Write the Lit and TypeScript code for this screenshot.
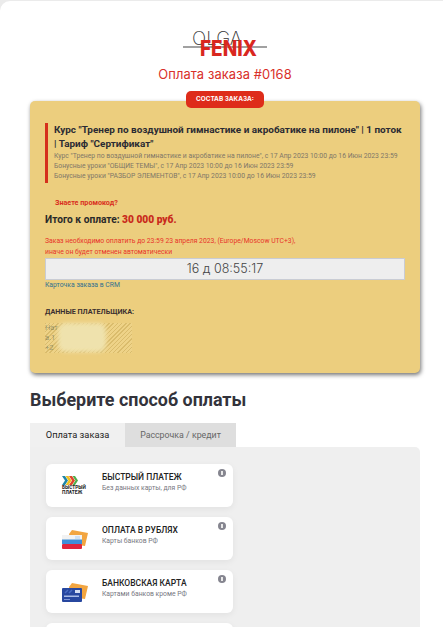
import { LitElement, html, css, svg } from "lit";
import { customElement } from "lit/decorators.js";

const cards = [
  { t: "БЫСТРЫЙ ПЛАТЕЖ", s: "Без данных карты, для РФ", i: "sbp" },
  { t: "ОПЛАТА В РУБЛЯХ", s: "Карты банков РФ", i: "rub" },
  { t: "БАНКОВСКАЯ КАРТА", s: "Картами банков кроме РФ", i: "bank" },
  { t: "", s: "", i: "" },
];

const backCard = svg`<path d="M7 5 L10 1 L26 4 L23 17 L9 15z" fill="#f2a540"/>`;

const icons: Record<string, unknown> = {
  sbp: html`<div class="sbp">
    <svg width="16" height="9" viewBox="0 0 16 9">
      <path d="M0 0h3l3 4.500-3 4.500H0l3-4.500z" fill="#1f86a8"/>
      <path d="M3.500 0h3l3 4.500-3 4.500h-3l3-4.500z" fill="#f0c020"/>
      <path d="M7 0h3l3 4.500-3 4.500H7l3-4.500z" fill="#e0452c"/>
      <path d="M10.500 0h2.500l3 4.500-3 4.500h-2.500l3-4.500z" fill="#4fae4a"/>
    </svg>
    <span>БЫСТРЫЙ<br />ПЛАТЕЖ</span>
  </div>`,
  rub: html`<svg width="26" height="20" viewBox="0 0 26 20">
    ${backCard}
    <rect x="0" y="6" width="20" height="5" fill="#f2f2f2"/>
    <rect x="13" y="7" width="5" height="3" fill="#cfe0f2"/>
    <rect x="0" y="10.500" width="20" height="4.500" fill="#3f8fd8"/>
    <rect x="0" y="15" width="20" height="5" rx="1" fill="#e0263c"/>
  </svg>`,
  bank: html`<svg width="26" height="20" viewBox="0 0 26 20">
    ${backCard}
    <rect x="0" y="6" width="20" height="14" rx="1" fill="#27479f"/>
    <path d="M3 11l3-3M7 11l3-3" stroke="#4a6cc4" stroke-width="1.500"/>
    <rect x="13" y="8" width="5" height="3" fill="#d5def2"/>
    <rect x="2" y="13.500" width="15" height="1.500" fill="#a9bbe6"/>
    <rect x="2" y="17" width="6" height="1" fill="#7f95d6"/>
  </svg>`,
};

@customElement("app-root")
export class AppRoot extends LitElement {
  static styles = css`
    :host {
      display: block;
      height: 627px;
      overflow: hidden;
      background: #ebebeb;
      padding-top: 1px;
      font-family: Roboto, "Open Sans", sans-serif;
      color: #2a2a2a;
      box-sizing: border-box;
    }
    * { box-sizing: border-box; }
    .page {
      height: 626px;
      background: #fff;
      border-top-left-radius: 10px;
      padding: 29px 23px 0 30px;
    }
    .logo {
      display: flex;
      justify-content: center;
      height: 36px;
    }
    .logo svg { display: block; overflow: visible; }
    .title {
      font-family: Inter, sans-serif;
      font-size: 12.900px;
      line-height: 18px;
      color: #d9302a;
      text-align: center;
      letter-spacing: 0.1px;
    }
    .head { height: 71px; }
    .badge-row { display: flex; justify-content: center; height: 0; position: relative; z-index: 1; }
    .badge {
      height: 17px;
      padding: 0 10px;
      transform: translateY(-10px);
      background: #de2c1a;
      border-radius: 5px;
      color: #fff;
      font: 700 6.400px/17px Inter, sans-serif;
      white-space: nowrap;
    }
    .order {
      height: 272px;
      background: #ecce7e;
      border-radius: 5px;
      box-shadow: 1px 2px 4px rgba(0, 0, 0, 0.55);
      padding: 22px 15px 0 15px;
    }
    .course {
      border-left: 3px solid #d5301c;
      padding-left: 6px;
      height: 60px;
    }
    .course h3 {
      margin: 0;
      font: 700 9.950px/14px Roboto, sans-serif;
      color: #2b2b33;
      white-space: nowrap;
    }
    .course p {
      margin: 0;
      font: 400 6.800px/10px Roboto, sans-serif;
      color: #7f7768;
      white-space: nowrap;
    }
    .promo {
      font: 700 7.200px/10px Roboto, sans-serif;
      color: #d9301f;
      margin: 15px 0 0 10px;
    }
    .total {
      font: 700 10.200px/14px Roboto, sans-serif;
      margin-top: 5px;
      color: #2a2a2a;
    }
    .total b { color: #c92a1c; }
    .warn {
      font: 400 6.800px/11px Roboto, sans-serif;
      color: #e8342a;
      margin-top: 9px;
      white-space: nowrap;
    }
    .timer {
      height: 22px;
      width: 360px;
      background: #eee;
      border: 1px solid #c9ccd4;
      font: 300 12.500px/20px Inter, sans-serif;
      text-align: center;
      color: #444;
    }
    .crm {
      font: 400 6.800px/10px Roboto, sans-serif;
      color: #33708f;
    }
    .payer-h {
      font: 700 7.200px/10px Roboto, sans-serif;
      margin-top: 17px;
      color: #3b3030;
    }
    .payer {
      position: relative;
      margin-top: 6px;
      width: 87px;
      height: 30px;
      font: 400 7.500px/10px Roboto, sans-serif;
      color: #4f5f50;
    }
    .mask {
      position: absolute;
      inset: 0;
      background: repeating-linear-gradient(135deg, rgba(200, 170, 90, 0.5) 0 1px, rgba(240, 215, 145, 0.5) 1px 3px);
    }
    .mask::after {
      content: "";
      position: absolute;
      left: 13px;
      top: 0;
      width: 48px;
      height: 29px;
      background: #efe2ad;
      border-radius: 8px;
      filter: blur(2px);
    }
    h2 {
      margin: 15px 0 0;
      font: 700 17.900px/24px Roboto, sans-serif;
      color: #33333b;
    }
    .tabs { display: flex; margin-top: 11px; height: 24px; }
    .tab {
      width: 95px;
      background: #f0f0f0;
      font: 400 9.300px/24px Roboto, sans-serif;
      text-align: center;
      color: #222;
    }
    .tab.off { width: 111px; background: #dedede; color: #666; font-size: 8.800px; }
    .panel {
      width: 390px;
      height: 200px;
      background: #efefef;
      border-radius: 0 5px 0 0;
      padding: 17px 16px;
      display: flex;
      flex-direction: column;
      gap: 10px;
    }
    .card {
      position: relative;
      flex: none;
      width: 187px;
      height: 43px;
      background: #fff;
      border-radius: 6px;
      box-shadow: 0 2px 7px rgba(0, 0, 0, 0.06);
      display: flex;
      align-items: center;
      padding-bottom: 6px;
    }
    .ic { width: 56px; display: flex; padding: 6px 0 0 16px; }
    .sbp { display: flex; flex-direction: column; align-items: flex-start; }
    .sbp span { font: 700 4.800px/4.500px Roboto, sans-serif; color: #222; margin-top: 1px; }
    .ct { font: 500 8.500px/11px Roboto, sans-serif; color: #222; }
    .cs { font: 400 6.800px/10px Roboto, sans-serif; color: #77777f; }
    .info {
      position: absolute;
      top: 5px;
      right: 7px;
      width: 8px;
      height: 8px;
      border-radius: 50%;
      background: #85858f;
    }
    .info::after {
      content: "";
      position: absolute;
      left: 3px;
      top: 2px;
      width: 2px;
      height: 4px;
      background: #e8e8e8;
    }
  `;

  render() {
    return html`
      <div class="page">
        <div class="head">
          <div class="logo">
            <svg width="86" height="36" viewBox="0 0 86 36">
              <text x="10" y="15" textLength="50" lengthAdjust="spacingAndGlyphs" font-family="Inter, sans-serif" font-size="19" font-weight="200" fill="#333">OLGA</text>
              <rect x="1" y="16.500" width="84" height="1" fill="#444"/>
              <text x="18" y="26" textLength="57" lengthAdjust="spacingAndGlyphs" font-family="Inter, sans-serif" font-size="22" font-weight="800" fill="#d9271f">FENIX</text>
            </svg>
          </div>
          <div class="title">Оплата заказа #0168</div>
        </div>
        <div class="badge-row"><div class="badge">СОСТАВ ЗАКАЗА:</div></div>
        <section class="order">
          <div class="course">
            <h3>Курс "Тренер по воздушной гимнастике и акробатике на пилоне" | 1 поток<br />| Тариф "Сертификат"</h3>
            <p>Курс "Тренер по воздушной гимнастике и акробатике на пилоне", с 17 Апр 2023 10:00 до 16 Июн 2023 23:59</p>
            <p>Бонусные уроки "ОБЩИЕ ТЕМЫ", с 17 Апр 2023 10:00 до 16 Июн 2023 23:59</p>
            <p>Бонусные уроки "РАЗБОР ЭЛЕМЕНТОВ", с 17 Апр 2023 10:00 до 16 Июн 2023 23:59</p>
          </div>
          <div class="promo">Знаете промокод?</div>
          <div class="total">Итого к оплате: <b>30 000 руб.</b></div>
          <div class="warn">Заказ необходимо оплатить до 23:59 23 апреля 2023, (Europe/Moscow UTC+3),<br />иначе он будет отменен автоматически</div>
          <div class="timer">16 д 08:55:17</div>
          <div class="crm">Карточка заказа в CRM</div>
          <div class="payer-h">ДАННЫЕ ПЛАТЕЛЬЩИКА:</div>
          <div class="payer">
            Нат<br />а.1<br />+2
            <div class="mask"></div>
          </div>
        </section>
        <h2>Выберите способ оплаты</h2>
        <div class="tabs">
          <div class="tab">Оплата заказа</div>
          <div class="tab off">Рассрочка / кредит</div>
        </div>
        <div class="panel">
          ${cards.map(
            (c) => html`<div class="card">
              ${c.i
                ? html`<div class="ic">${icons[c.i]}</div>
                    <div>
                      <div class="ct">${c.t}</div>
                      <div class="cs">${c.s}</div>
                    </div>
                    <div class="info"></div>`
                : ""}
            </div>`
          )}
        </div>
      </div>
    `;
  }
}
